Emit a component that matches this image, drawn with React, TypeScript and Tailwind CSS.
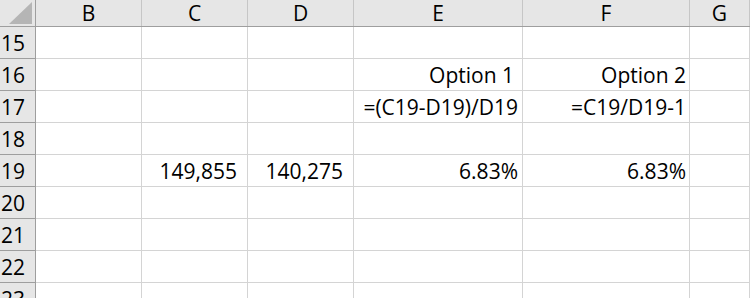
const columns = [
  { key: "B", width: "w-[106px]" },
  { key: "C", width: "w-[106px]" },
  { key: "D", width: "w-[106px]" },
  { key: "E", width: "w-[169px]" },
  { key: "F", width: "w-[167px]" },
  { key: "G", width: "w-[60px]" },
];

type Cell = { text: string; pad: string };
type Row = { n: number; cells: Record<string, Cell> };

const rows: Row[] = [
  { n: 15, cells: {} },
  {
    n: 16,
    cells: {
      E: { text: "Option 1", pad: "pr-[8px]" },
      F: { text: "Option 2", pad: "pr-[3px]" },
    },
  },
  {
    n: 17,
    cells: {
      E: { text: "=(C19-D19)/D19", pad: "pr-[4px]" },
      F: { text: "=C19/D19-1", pad: "pr-[3px]" },
    },
  },
  { n: 18, cells: {} },
  {
    n: 19,
    cells: {
      // accounting format leaves a gap after the number
      C: { text: "149,855", pad: "pr-[10px]" },
      D: { text: "140,275", pad: "pr-[10px]" },
      E: { text: "6.83%", pad: "pr-[4px]" },
      F: { text: "6.83%", pad: "pr-[3px]" },
    },
  },
  { n: 20, cells: {} },
  { n: 21, cells: {} },
  { n: 22, cells: {} },
  { n: 23, cells: {} },
];

export default function App() {
  return (
    <div
      className="w-[750px] h-[298px] overflow-hidden bg-white text-[21px] text-black"
      style={{ fontFamily: '"Open Sans", "Liberation Sans", sans-serif' }}
    >
      <div className="flex h-[27px] bg-[#e6e6e6] border-b border-[#9e9e9e]">
        <div className="w-[36px] shrink-0 border-r border-[#9e9e9e] relative">
          <svg className="absolute left-0 top-0" width="35" height="26" viewBox="0 0 35 26">
            <polygon points="9,24 32,24 32,2" fill="#b5b5b5" />
          </svg>
        </div>
        {columns.map((c) => (
          <div
            key={c.key}
            className={`${c.width} shrink-0 border-r border-[#c6c6c6] text-center leading-[26px]`}
          >
            {c.key}
          </div>
        ))}
      </div>

      {rows.map((r) => (
        <div key={r.n} className="flex h-[32px]">
          <div className="w-[36px] shrink-0 bg-[#e6e6e6] border-r border-b border-[#9e9e9e] pl-[1px] leading-[32px]">
            {r.n}
          </div>
          {columns.map((c) => {
            const cell = r.cells[c.key];
            return (
              <div
                key={c.key}
                className={`${c.width} shrink-0 border-r border-b border-[#d4d4d4] text-right leading-[32px] whitespace-nowrap ${cell ? cell.pad : ""}`}
              >
                {cell?.text ?? ""}
              </div>
            );
          })}
        </div>
      ))}
    </div>
  );
}
